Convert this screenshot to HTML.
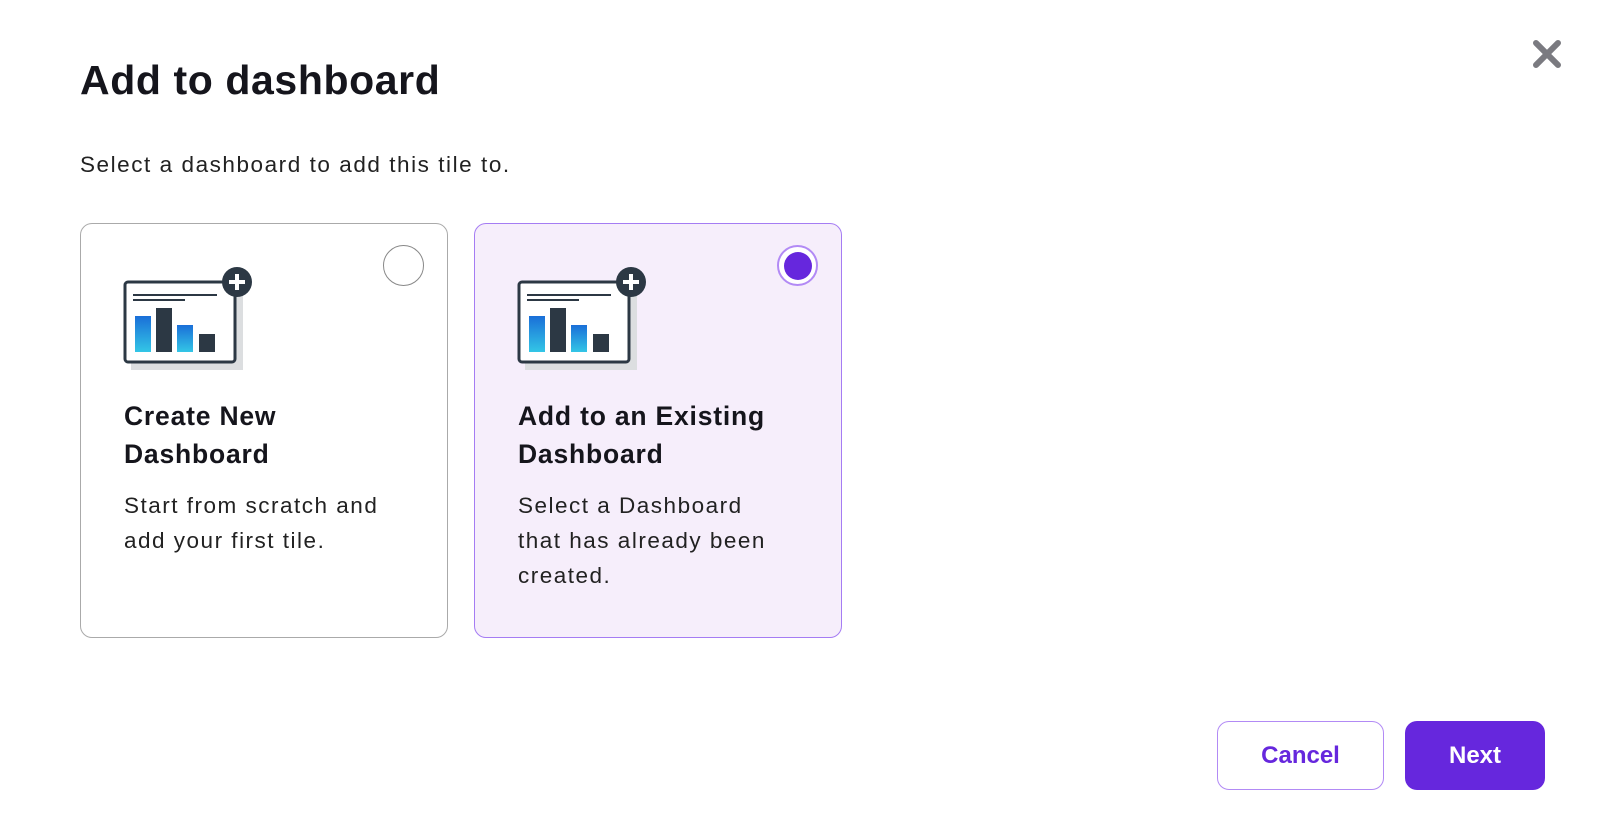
<!DOCTYPE html>
<html><head><meta charset="utf-8"><style>
*{margin:0;padding:0;box-sizing:border-box}
body{width:1600px;height:840px;background:#fff;font-family:"Liberation Sans",sans-serif;color:#111;position:relative;overflow:hidden}
.abs{position:absolute}
h1{position:absolute;left:80px;top:57px;font-size:41px;font-weight:bold;letter-spacing:0.6px;color:#15151c}
.sub{left:80px;top:152px;font-size:22.5px;color:#222;letter-spacing:1.55px}
.card{position:absolute;top:223px;width:368px;height:415px;border:1.5px solid #aaa;border-radius:12px;background:#fff}
.card.sel{background:#f6eefb;border-color:#a57cf3}
.radio{position:absolute;top:21px;right:23px;width:41px;height:41px;border-radius:50%;border:1.5px solid #888;background:#fff}
.sel .radio{border:2px solid #b28af5;background:#fff}
.sel .radio::after{content:"";position:absolute;left:4.5px;top:4.5px;width:28px;height:28px;border-radius:50%;background:#6627dd}
.card svg{position:absolute;left:40px;top:38px}
.ct{position:absolute;left:43px;top:173px;font-size:26.5px;font-weight:bold;line-height:38px;color:#15151c;letter-spacing:0.8px}
.cb{position:absolute;left:43px;top:264px;font-size:22.5px;line-height:35px;color:#222;letter-spacing:1.5px}
.btn{position:absolute;top:721px;height:69px;border-radius:12px;font-size:24px;font-weight:bold;display:flex;align-items:center;justify-content:center}
</style></head><body>
<h1>Add to dashboard</h1>
<div class="abs sub">Select a dashboard to add this tile to.</div>
<svg class="abs" style="left:1532px;top:39px" width="30" height="30" viewBox="0 0 30 30"><path d="M4 4L26 26M26 4L4 26" stroke="#7a7a80" stroke-width="6" stroke-linecap="round"/></svg>

<div class="card" style="left:80px">
<div class="radio"></div>
<svg width="140" height="110" viewBox="-2 -18 140 110"><defs><linearGradient id="g" x1="0" y1="0" x2="0" y2="1"><stop offset="0" stop-color="#1a6fd8"/><stop offset="1" stop-color="#33c6e6"/></linearGradient></defs>
<rect x="8" y="8" width="112" height="82" fill="#dcdee0"/>
<rect x="2" y="2" width="110" height="80" rx="3" fill="#fff" stroke="#2c3844" stroke-width="3"/>
<rect x="10" y="14" width="84" height="2" fill="#2c3844"/><rect x="10" y="19" width="52" height="2" fill="#2c3844"/>
<rect x="12" y="36" width="16" height="36" fill="url(#g)"/><rect x="33" y="28" width="16" height="44" fill="#2c3844"/>
<rect x="54" y="45" width="16" height="27" fill="url(#g)"/><rect x="76" y="54" width="16" height="18" fill="#2c3844"/>
<circle cx="114" cy="2" r="15" fill="#2c3844"/><path d="M114 -6V10M106 2H122" stroke="#fff" stroke-width="4"/>
</svg>
<div class="ct">Create New<br>Dashboard</div>
<div class="cb">Start from scratch and<br>add your first tile.</div>
</div>

<div class="card sel" style="left:474px">
<div class="radio"></div>
<svg width="140" height="110" viewBox="-2 -18 140 110">
<rect x="8" y="8" width="112" height="82" fill="#dcdee0"/>
<rect x="2" y="2" width="110" height="80" rx="3" fill="#fff" stroke="#2c3844" stroke-width="3"/>
<rect x="10" y="14" width="84" height="2" fill="#2c3844"/><rect x="10" y="19" width="52" height="2" fill="#2c3844"/>
<rect x="12" y="36" width="16" height="36" fill="url(#g)"/><rect x="33" y="28" width="16" height="44" fill="#2c3844"/>
<rect x="54" y="45" width="16" height="27" fill="url(#g)"/><rect x="76" y="54" width="16" height="18" fill="#2c3844"/>
<circle cx="114" cy="2" r="15" fill="#2c3844"/><path d="M114 -6V10M106 2H122" stroke="#fff" stroke-width="4"/>
</svg>
<div class="ct">Add to an Existing<br>Dashboard</div>
<div class="cb">Select a Dashboard<br>that has already been<br>created.</div>
</div>

<div class="btn" style="left:1217px;width:167px;border:1.5px solid #b28af5;color:#6627dd;background:#fff">Cancel</div>
<div class="btn" style="left:1405px;width:140px;background:#6627dd;color:#fff">Next</div>
</body></html>
